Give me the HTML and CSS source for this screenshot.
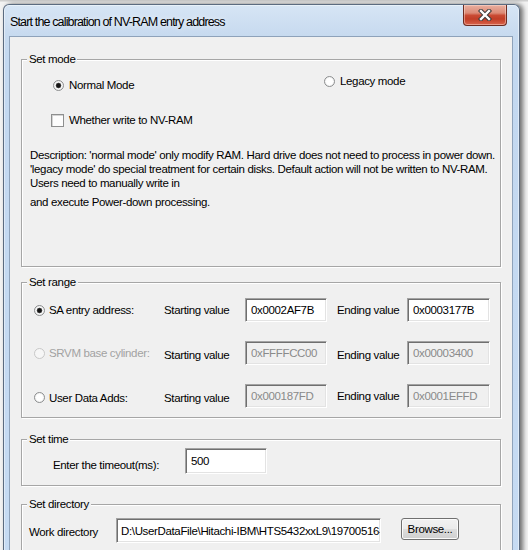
FILE: index.html
```html
<!DOCTYPE html>
<html>
<head>
<meta charset="utf-8">
<link rel="stylesheet" href="styles.css">
</head>
<body>
<div class="desk">
  <div class="window">
    <div class="titlebar">
      <span class="title">Start the calibration of NV-RAM entry address</span>
      <span class="close">
        <svg width="14" height="12" viewBox="0 0 14 12">
          <path d="M3 2 L11 10 M11 2 L3 10" stroke="#3a3a3a" stroke-width="4.4" stroke-linecap="square" fill="none"/>
          <path d="M3 2 L11 10 M11 2 L3 10" stroke="#ffffff" stroke-width="2.4" stroke-linecap="square" fill="none"/>
        </svg>
      </span>
    </div>
    <div class="client">
      <fieldset class="group g-mode">
        <legend>Set mode</legend>
        <div class="mode-row">
          <label class="opt normal"><span class="radio on"></span>Normal Mode</label>
          <label class="opt legacy"><span class="radio"></span>Legacy mode</label>
        </div>
        <label class="opt check-row"><span class="check"></span>Whether write to NV-RAM</label>
        <div class="desc">
          <p>Description: 'normal mode' only modify RAM. Hard drive does not need to process in power down.<br>'legacy mode' do special treatment for certain disks. Default action will not be written to NV-RAM.<br>Users need to manually write in</p>
          <p class="desc-tail">and execute Power-down processing.</p>
        </div>
      </fieldset>

      <fieldset class="group g-range">
        <legend>Set range</legend>
        <div class="range-grid">
          <label class="opt ropt"><span class="radio on"></span>SA entry address:</label>
          <span class="lbl">Starting value</span>
          <span class="edit">0x0002AF7B</span>
          <span class="lbl end">Ending value</span>
          <span class="edit">0x0003177B</span>

          <label class="opt ropt disabled"><span class="radio dis"></span>SRVM base cylinder:</label>
          <span class="lbl low">Starting value</span>
          <span class="edit dis">0xFFFFCC00</span>
          <span class="lbl end low">Ending value</span>
          <span class="edit dis">0x00003400</span>

          <label class="opt ropt low"><span class="radio"></span>User Data Adds:</label>
          <span class="lbl low">Starting value</span>
          <span class="edit dis">0x000187FD</span>
          <span class="lbl end">Ending value</span>
          <span class="edit dis">0x0001EFFD</span>
        </div>
      </fieldset>

      <fieldset class="group g-time">
        <legend>Set time</legend>
        <div class="time-row">
          <span class="lbl time-lbl">Enter the timeout(ms):</span>
          <span class="edit time-edit">500</span>
        </div>
      </fieldset>

      <fieldset class="group g-dir">
        <legend>Set directory</legend>
        <div class="dir-row">
          <span class="lbl dir-lbl">Work directory</span>
          <span class="edit dir-edit">D:\UserDataFile\Hitachi-IBM\HTS5432xxL9\19700516-0</span>
          <span class="button">Browse...</span>
        </div>
      </fieldset>
    </div>
  </div>
</div>
</body>
</html>
```

FILE: styles.css
```css
* { box-sizing: border-box; }

html, body {
  margin: 0;
  padding: 0;
}

body {
  background: #eeeeee;
  font-family: "Liberation Sans", Arial, sans-serif;
  font-size: 11.5px;
  letter-spacing: -0.35px;
  color: #000;
}

.desk {
  width: 528px;
  height: 550px;
  overflow: hidden;
  padding: 4px 0 0 3px;
  background: linear-gradient(to bottom, #cfcfcf 0, #cfcfcf 1px, #f3f3f3 2px);
}

.window {
  width: 517px;
  height: 620px;
  border: 1px solid #5b6b80;
  border-bottom: none;
  border-radius: 6px 6px 0 0;
  padding: 0 6px 0 5px;
  background: linear-gradient(to bottom, #d6e5f5 0, #c7daef 30px, #c3d8f0 60px, #c6dbf3 100%);
  box-shadow: 3px 0 5px rgba(0, 0, 0, 0.55), inset 0 0 0 1px rgba(255, 255, 255, 0.45);
}

.titlebar {
  height: 31px;
  display: flex;
  align-items: flex-start;
  justify-content: space-between;
}

.title {
  font-size: 12.5px;
  letter-spacing: -0.85px;
  line-height: 16px;
  margin-top: 9px;
  margin-left: 1px;
  color: #000;
  text-shadow: 0 0 6px rgba(255, 255, 255, 0.9);
}

.close {
  width: 44px;
  height: 21px;
  margin-right: 6px;
  border: 1px solid #6d2b20;
  border-top: none;
  border-radius: 0 0 4px 4px;
  background: linear-gradient(to bottom, #e9ae9f 0%, #dc8a76 40%, #c94a33 52%, #c13e27 70%, #d9634b 100%);
  box-shadow: inset 0 0 0 1px rgba(255, 230, 220, 0.45);
  display: flex;
  align-items: center;
  justify-content: center;
}

.client {
  height: 600px;
  border: 1px solid #8ea2ba;
  background: #f0f0f0;
  padding-top: 14px;
}

.group {
  margin: 0 11px;
  padding: 0;
  border: 1px solid #a6a6a6;
  box-shadow: inset 1px 1px 0 #ffffff, 1px 1px 0 #ffffff;
  min-width: 0;
}

.group legend {
  margin-left: 5px;
  padding: 0 2px;
  line-height: 16px;
  background: #f0f0f0;
}

.opt {
  display: flex;
  align-items: center;
  gap: 5px;
  line-height: 14px;
  white-space: nowrap;
}

.radio {
  width: 11px;
  height: 11px;
  flex: none;
  border-radius: 50%;
  border: 1px solid #8c8e8f;
  background: radial-gradient(circle, #ffffff 0, #ffffff 45%, #e2e2e2 100%);
}

.radio.on {
  background: radial-gradient(circle, #151515 0, #151515 1.8px, #6a6a6a 2.6px, #ffffff 3.2px, #f4f4f4 60%, #dcdcdc 100%);
}

.radio.dis {
  border-color: #c8c8c8;
  background: #f6f6f6;
}

.check {
  width: 13px;
  height: 13px;
  flex: none;
  border: 1px solid #8e8f8f;
  background: #fdfdfd;
  box-shadow: inset 1px 1px 0 #d4d4d4;
}

/* Set mode */
.mode-row {
  display: grid;
  grid-template-columns: 271px auto;
  align-items: start;
  padding-left: 31px;
}

.normal { margin-top: 11px; }
.legacy { margin-top: 7px; }

.check-row {
  margin-top: 21px;
  padding-left: 29px;
  gap: 5px;
}

.desc {
  margin-top: 21px;
  padding: 0 0 57px 8px;
  line-height: 14px;
  white-space: nowrap;
}

.desc p { margin: 0; }
.desc .desc-tail { margin-top: 5px; }

/* Set range */
.g-range { margin-top: 7px; }

.range-grid {
  display: grid;
  grid-template-columns: 130px 81px 82px 80px 83px;
  grid-template-rows: 24px 24px 24px;
  row-gap: 19px;
  align-items: center;
  margin-top: 8px;
  padding: 0 0 9px 12px;
}

.ropt { gap: 4px; }

.lbl {
  line-height: 14px;
  white-space: nowrap;
}

.lbl.end { padding-left: 10px; }
.low { padding-top: 3px; }
.lbl.end.low { padding-top: 4px; }

.disabled { color: #a2a2a2; }

.edit {
  height: 24px;
  display: flex;
  align-items: center;
  padding: 0 5px;
  overflow: hidden;
  white-space: nowrap;
  background: #ffffff;
  border: 1px solid;
  border-color: #a3a3a3 #ffffff #ffffff #a3a3a3;
  box-shadow: inset 1px 1px 0 #6f6f6f, inset -1px -1px 0 #e3e3e3;
}

.edit.dis {
  background: #f0f0f0;
  color: #8a8a8a;
}

/* Set time */
.g-time { margin-top: 13px; }

.time-row {
  display: flex;
  align-items: center;
  margin-top: 1px;
  padding: 0 0 11px 31px;
}

.time-lbl {
  width: 132px;
  padding-top: 8px;
}

.time-edit {
  width: 82px;
  height: 26px;
}

/* Set directory */
.g-dir { margin-top: 10px; }

.dir-row {
  display: flex;
  align-items: flex-start;
  margin-top: 6px;
  padding: 0 0 20px 7px;
}

.dir-lbl {
  width: 87px;
  padding-top: 7px;
}

.dir-edit {
  width: 265px;
  height: 25px;
  padding-left: 4px;
}

.button {
  width: 58px;
  height: 22px;
  margin-left: 20px;
  display: flex;
  align-items: center;
  justify-content: center;
  white-space: nowrap;
  border: 1px solid #707070;
  border-radius: 3px;
  background: linear-gradient(to bottom, #f2f2f2 0%, #ebebeb 48%, #dddddd 52%, #cfcfcf 100%);
  box-shadow: inset 0 0 0 1px #fbfbfb;
}
```
